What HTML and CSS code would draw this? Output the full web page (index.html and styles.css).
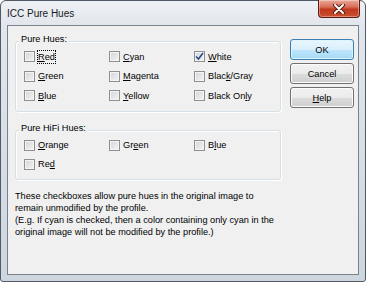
FILE: index.html
```html
<!DOCTYPE html>
<html lang="en">
<head>
  <meta charset="UTF-8">
  <meta name="viewport" content="width=device-width, initial-scale=1.0">
  <title>ICC Pure Hues</title>
  <link rel="stylesheet" href="styles.css">
</head>
<body>
  <div class="window">
    <div class="titlebar">
      <span class="title">ICC Pure Hues</span>
      <button class="close" title="Close">
        <svg width="14" height="10" viewBox="0 0 14 10">
          <path d="M3 1 L11 9 M11 1 L3 9" stroke="#5a1d12" stroke-width="4" stroke-linecap="round"/>
          <path d="M3 1 L11 9 M11 1 L3 9" stroke="#fff" stroke-width="2" stroke-linecap="round"/>
        </svg>
      </button>
    </div>

    <div class="client">
      <div class="left">
        <div class="group">
          <div class="group-title">Pure Hues:</div>
          <div class="checks">
            <label class="check"><span class="box"></span><span class="focus"><u>R</u>ed</span></label>
            <label class="check"><span class="box"></span><span><u>C</u>yan</span></label>
            <label class="check"><span class="box checked"><svg width="9" height="9" viewBox="0 0 9 9"><path d="M1 4.5 L3.5 7 L8 1" fill="none" stroke="#2b4a8c" stroke-width="1.6"/></svg></span><span><u>W</u>hite</span></label>
            <label class="check"><span class="box"></span><span><u>G</u>reen</span></label>
            <label class="check"><span class="box"></span><span><u>M</u>agenta</span></label>
            <label class="check"><span class="box"></span><span>Blac<u>k</u>/Gray</span></label>
            <label class="check"><span class="box"></span><span><u>B</u>lue</span></label>
            <label class="check"><span class="box"></span><span><u>Y</u>ellow</span></label>
            <label class="check"><span class="box"></span><span>Black On<u>l</u>y</span></label>
          </div>
        </div>

        <div class="group hifi">
          <div class="group-title">Pure HiFi Hues:</div>
          <div class="checks">
            <label class="check"><span class="box"></span><span><u>O</u>range</span></label>
            <label class="check"><span class="box"></span><span>Gr<u>e</u>en</span></label>
            <label class="check"><span class="box"></span><span>B<u>l</u>ue</span></label>
            <label class="check"><span class="box"></span><span>Re<u>d</u></span></label>
          </div>
        </div>

        <p class="note">
          These checkboxes allow pure hues in the original image to<br>
          remain unmodified by the profile.<br>
          (E.g. If cyan is checked, then a color containing only cyan in the<br>
          original image will not be modified by the profile.)
        </p>
      </div>

      <div class="actions">
        <button class="btn default">OK</button>
        <button class="btn">Cancel</button>
        <button class="btn"><u>H</u>elp</button>
      </div>
    </div>
  </div>
</body>
</html>
```

FILE: styles.css
```css
html, body {
  margin: 0;
  padding: 0;
  background: #fff;
}

body {
  font-family: 'Liberation Sans', Arial, sans-serif;
  font-size: 9.2px;
  color: #000;
}

.window {
  width: 366px;
  height: 282px;
  box-sizing: border-box;
  border: 1px solid #4f5a66;
  border-radius: 6px 6px 3px 3px;
  background: linear-gradient(#eef1f5 0, #e2e7ed 24px, #cdd5df 100%);
  padding: 0 6px 6px;
  display: flex;
  flex-direction: column;
}

.titlebar {
  height: 24px;
  display: flex;
  align-items: flex-start;
}

.title {
  font-size: 10px;
  line-height: 12px;
  margin-top: 7px;
  color: #1a1a1a;
}

.close {
  margin: -1px -1px 0 auto;
  width: 42px;
  height: 18px;
  padding: 0;
  border: 1px solid #5e1a10;
  border-top: none;
  border-radius: 0 0 4px 4px;
  background: linear-gradient(#e9a99a 0, #d8705a 40%, #c0391f 55%, #c9502f 100%);
  box-shadow: inset 0 0 0 1px rgba(255, 255, 255, 0.35);
  display: flex;
  align-items: center;
  justify-content: center;
}

.client {
  flex: 1;
  border: 1px solid #79828c;
  background: #f0f0f0;
  display: flex;
  gap: 9px;
  padding: 0 0 0 7px;
}

.left {
  width: 266px;
  padding-top: 15px;
}

.group {
  border: 1px solid #d5dfe5;
  border-radius: 3px;
  box-shadow: inset 1px 1px 0 #fff, 1px 1px 0 #fff;
  padding: 0 0 5px 8px;
}

.group.hifi {
  margin-top: 18px;
}

.group-title {
  display: table;
  margin: -9px 0 2px -5px;
  padding: 0 2px;
  line-height: 12px;
  background: #f0f0f0;
}

.checks {
  display: grid;
  grid-template-columns: repeat(3, 85px);
  grid-auto-rows: 19.5px;
}

.hifi .checks {
  grid-auto-rows: 19px;
}

.check {
  display: flex;
  align-items: center;
  gap: 3px;
  line-height: 12px;
}

.box {
  width: 11px;
  height: 11px;
  box-sizing: border-box;
  border: 1px solid #8e8f8f;
  background: linear-gradient(135deg, #d2d5da, #f4f4f4);
  box-shadow: inset 0 0 0 1px #f4f4f4;
  display: flex;
  align-items: center;
  justify-content: center;
}

.box.checked svg {
  display: block;
}

.focus {
  outline: 1px dotted #000;
  outline-offset: 0;
}

u {
  text-decoration-thickness: 1px;
  text-underline-offset: 1px;
}

.note {
  margin: 10px 0 0;
  line-height: 12px;
}

.actions {
  display: flex;
  flex-direction: column;
  gap: 3px;
  padding-top: 13px;
}

.btn {
  width: 64px;
  height: 21px;
  padding: 0;
  font-family: inherit;
  font-size: 9.2px;
  color: #000;
  border: 1px solid #707070;
  border-radius: 3px;
  background: linear-gradient(#f2f2f2 0, #ebebeb 50%, #dddddd 51%, #cfcfcf 100%);
  box-shadow: inset 0 0 0 1px #fbfbfb;
}

.btn.default {
  border-color: #3c7fb1;
  background: linear-gradient(#eaf6fd 0, #d9f0fc 50%, #bee6fd 51%, #a7d9f5 100%);
  box-shadow: inset 0 0 0 1px #dcf4fe;
}
```
